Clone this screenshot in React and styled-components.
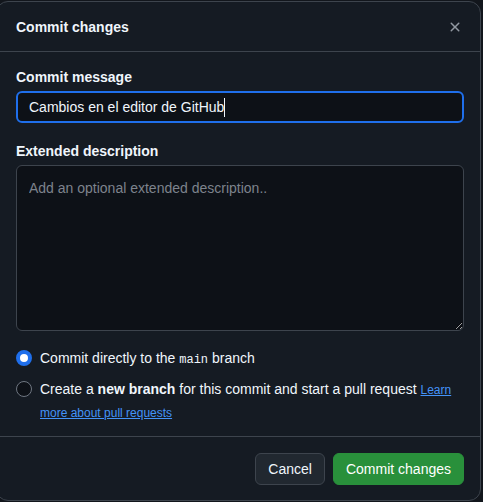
import React from "react";
import styled, { createGlobalStyle } from "styled-components";

const Global = createGlobalStyle`
  html, body { margin: 0; padding: 0; background: #12161c; overflow: hidden; }
  body { font-family: "Liberation Sans", Arial, sans-serif; color: #f0f6fc; }
  * { box-sizing: border-box; }
`;

const Dialog = styled.div`
  margin: 1px 0 0 -4px;
  width: 485px;
  height: 500px;
  background: #151b23;
  border: 1px solid #3d444d;
  border-radius: 12px;
  display: flex;
  flex-direction: column;
`;

const Header = styled.div`
  height: 50px;
  flex-shrink: 0;
  display: flex;
  align-items: center;
  justify-content: space-between;
  padding: 0 16px 0 19px;
  border-bottom: 1px solid #3d444d;
`;

const Title = styled.h1`
  margin: 0;
  font-size: 14px;
  font-weight: 700;
  color: #f0f6fc;
  line-height: 20px;
`;

const CloseButton = styled.button`
  width: 32px;
  height: 32px;
  margin-right: -7px;
  border: 0;
  background: transparent;
  display: flex;
  align-items: center;
  justify-content: center;
  color: #9198a1;
  padding: 0;
`;

const Body = styled.div`
  flex: 1;
  padding: 15px 16px 0 19px;
  display: flex;
  flex-direction: column;
`;

const Label = styled.div`
  font-size: 14px;
  font-weight: 700;
  line-height: 20px;
  color: #f0f6fc;
  margin-top: ${(p) => p.$top || 0}px;
  margin-bottom: ${(p) => p.$bottom || 4}px;
`;

const FocusInput = styled.div`
  height: 32px;
  border: 2px solid #1f6feb;
  border-radius: 6px;
  background: #0d1117;
  display: flex;
  align-items: center;
  padding: 0 11px;
  font-size: 14px;
  color: #f0f6fc;
`;

const Caret = styled.span`
  display: inline-block;
  width: 1px;
  height: 19px;
  background: #f0f6fc;
`;

const TextArea = styled.textarea`
  height: 166px;
  width: 100%;
  flex-shrink: 0;
  border: 1px solid #3d444d;
  border-radius: 6px;
  background: #0d1117;
  color: #f0f6fc;
  font-family: "Liberation Sans", Arial, sans-serif;
  font-size: 14px;
  line-height: 20px;
  padding: 12px 12px;
  outline: none;
  resize: vertical;
  color-scheme: dark;
  &::placeholder { color: #9198a1; opacity: 0.85; }
`;

const Options = styled.div`
  margin-top: 17px;
  display: flex;
  flex-direction: column;
  gap: 8px;
`;

const OptionRow = styled.label`
  display: flex;
  align-items: flex-start;
  gap: 8px;
  font-size: 14px;
  line-height: ${(p) => p.$lh || 20}px;
  color: #f0f6fc;
`;

const OptionText = styled.span`
  line-height: inherit;
`;

const RadioBox = styled.span`
  flex-shrink: 0;
  width: 16px;
  height: 16px;
  border-radius: 50%;
  margin-top: ${(p) => p.$mt || 2}px;
  background: ${(p) => (p.$checked ? "#ffffff" : "#0d1117")};
  border: ${(p) => (p.$checked ? "4px solid #1f6feb" : "1px solid #6e7681")};
`;

const Mono = styled.code`
  font-family: "Liberation Mono", "DejaVu Sans Mono", monospace;
  font-size: 12px;
`;

const Link = styled.a`
  color: #4493f8;
  font-size: 12px;
  line-height: 14px;
  text-decoration: underline;
`;

const Footer = styled.div`
  flex-shrink: 0;
  border-top: 1px solid #3d444d;
  padding: 16px 16px 15px;
  display: flex;
  justify-content: flex-end;
  gap: 8px;
`;

const Button = styled.button`
  height: 32px;
  padding: 0 12px;
  border-radius: 6px;
  font-family: "Liberation Sans", Arial, sans-serif;
  font-size: 14px;
  color: ${(p) => (p.$primary ? "#ffffff" : "#f0f6fc")};
  background: ${(p) => (p.$primary ? "#29903b" : "#212830")};
  border: 1px solid ${(p) => (p.$primary ? "#29903b" : "#3d444d")};
`;

export default function App() {
  return (
    <>
      <Global />
      <Dialog>
        <Header>
          <Title>Commit changes</Title>
          <CloseButton aria-label="Close">
            <svg width="16" height="16" viewBox="0 0 16 16" fill="currentColor">
              <path d="M3.72 3.72a.75.75 0 0 1 1.06 0L8 6.94l3.22-3.22a.749.749 0 0 1 1.275.326.749.749 0 0 1-.215.734L9.06 8l3.22 3.22a.749.749 0 0 1-.326 1.275.749.749 0 0 1-.734-.215L8 9.06l-3.22 3.22a.751.751 0 0 1-1.042-.018.751.751 0 0 1-.018-1.042L6.94 8 3.72 4.78a.75.75 0 0 1 0-1.06Z" />
            </svg>
          </CloseButton>
        </Header>
        <Body>
          <Label>Commit message</Label>
          <FocusInput>
            Cambios en el editor de GitHub
            <Caret />
          </FocusInput>
          <Label $top={18}>Extended description</Label>
          <TextArea placeholder="Add an optional extended description.." />
          <Options>
            <OptionRow>
              <RadioBox $checked />
              <OptionText>
                Commit directly to the <Mono>main</Mono> branch
              </OptionText>
            </OptionRow>
            <OptionRow $lh={23}>
              <RadioBox $mt={3} />
              <OptionText>
                Create a <b>new branch</b> for this commit and start a pull request{" "}
                <Link href="#">Learn more about pull requests</Link>
              </OptionText>
            </OptionRow>
          </Options>
        </Body>
        <Footer>
          <Button>Cancel</Button>
          <Button $primary>Commit changes</Button>
        </Footer>
      </Dialog>
    </>
  );
}
